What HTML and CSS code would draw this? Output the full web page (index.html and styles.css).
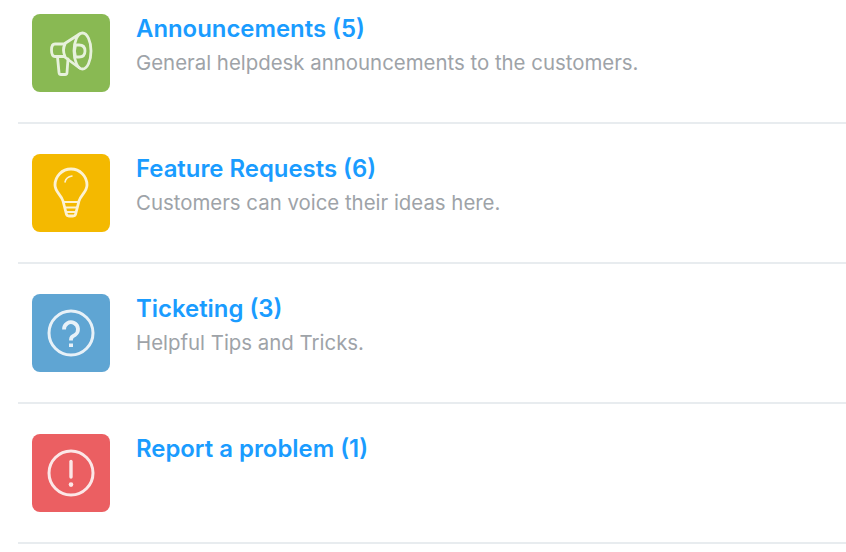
FILE: index.html
```html
<!DOCTYPE html>
<html lang="en">
<head>
<meta charset="utf-8">
<title>Helpdesk categories</title>
<link rel="stylesheet" href="styles.css">
</head>
<body>
<ul class="list">
  <li class="row">
    <div class="tile tile-green">
      <svg class="icon" viewBox="0 0 78 78" fill="none" stroke="#fff" stroke-width="2.800" stroke-linecap="round" stroke-linejoin="round" opacity=".8">
        <ellipse cx="50.500" cy="37" rx="8.500" ry="18"/>
        <path d="M47.500 20 L32 30 H23 Q19.500 30 19.500 36 Q19.500 42.500 23 42.500 H32 L47.500 54"/>
        <path d="M33 30 Q30 36 33 42.500"/>
        <path d="M43.500 31 H47 Q53 31 53 37 Q53 43 47 43 H43.500 Q41.500 37 43.500 31"/>
        <path d="M25.500 43 L27 58.500 Q27.300 60.500 29 60.500 H33 Q35 60.500 35 58.500 L36 45"/>
      </svg>
    </div>
    <div class="text">
      <a class="title">Announcements (5)</a>
      <p class="desc">General helpdesk announcements to the customers.</p>
    </div>
  </li>
  <li class="row">
    <div class="tile tile-yellow">
      <svg class="icon" viewBox="0 0 78 78" fill="none" stroke="#fff" stroke-width="2.800" stroke-linecap="round" stroke-linejoin="round" opacity=".82">
        <path d="M31 47 C29.500 41 23 38 23 31 A16 16 0 0 1 55 31 C55 38 48.500 41 47 47 L43.500 60.500 Q43 62 41 62 H37 Q35 62 34.500 60.500 Z"/>
        <path d="M31.500 48 H46.500 M33 53.500 H45 M34.500 58 H43.500" stroke-width="2.200"/>
        <path d="M33 28 Q34 23 40 22" stroke-width="1.500"/>
      </svg>
    </div>
    <div class="text">
      <a class="title">Feature Requests (6)</a>
      <p class="desc">Customers can voice their ideas here.</p>
    </div>
  </li>
  <li class="row">
    <div class="tile tile-blue">
      <svg class="icon" viewBox="0 0 78 78" fill="none" stroke="#fff" stroke-width="3" stroke-linecap="round" stroke-linejoin="round" opacity=".85">
        <circle cx="39" cy="39" r="22"/>
        <path d="M32 35.500 A7 7 0 1 1 43 41 Q39 42.500 39 45.500 V46.500" stroke-width="3.800" stroke-linecap="butt"/>
        <path d="M39 49.500 V53" stroke-width="4" stroke-linecap="butt"/>
      </svg>
    </div>
    <div class="text">
      <a class="title">Ticketing (3)</a>
      <p class="desc">Helpful Tips and Tricks.</p>
    </div>
  </li>
  <li class="row">
    <div class="tile tile-red">
      <svg class="icon" viewBox="0 0 78 78" fill="none" stroke="#fff" stroke-width="3" stroke-linecap="round" stroke-linejoin="round" opacity=".85">
        <circle cx="39" cy="39" r="22"/>
        <path d="M39 27.500 V43" stroke-width="3.400"/>
        <path d="M39 50.500 V50.600" stroke-width="4.600"/>
      </svg>
    </div>
    <div class="text">
      <a class="title">Report a problem (1)</a>
    </div>
  </li>
</ul>
</body>
</html>
```
FILE: styles.css
```css
html, body {
  margin: 0;
  padding: 0;
  background: #fff;
}

body {
  font-family: "Inter", "Liberation Sans", sans-serif;
}

.list {
  list-style: none;
  margin: 0 0 0 18px;
  padding: 0;
}

.row {
  display: flex;
  align-items: flex-start;
  gap: 26px;
  box-sizing: border-box;
  height: 140px;
  padding: 30px 0 0 14px;
  border-bottom: 2px solid #e8ecef;
}

.row:first-child {
  height: 124px;
  padding-top: 14px;
}

.tile {
  flex: none;
  width: 78px;
  height: 78px;
  border-radius: 8px;
}

.tile-green { background: #89b953; }
.tile-yellow { background: #f4b900; }
.tile-blue { background: #5fa5d3; }
.tile-red { background: #eb5f62; }

.icon {
  display: block;
  width: 78px;
  height: 78px;
}

.text {
  min-width: 0;
}

.title {
  display: block;
  margin-top: 1px;
  color: #1a9cff;
  font-size: 23.900px;
  font-weight: 600;
  line-height: 28px;
}

.desc {
  margin: 6px 0 0;
  color: #9ea3a8;
  font-size: 20.400px;
  line-height: 28px;
}
```
